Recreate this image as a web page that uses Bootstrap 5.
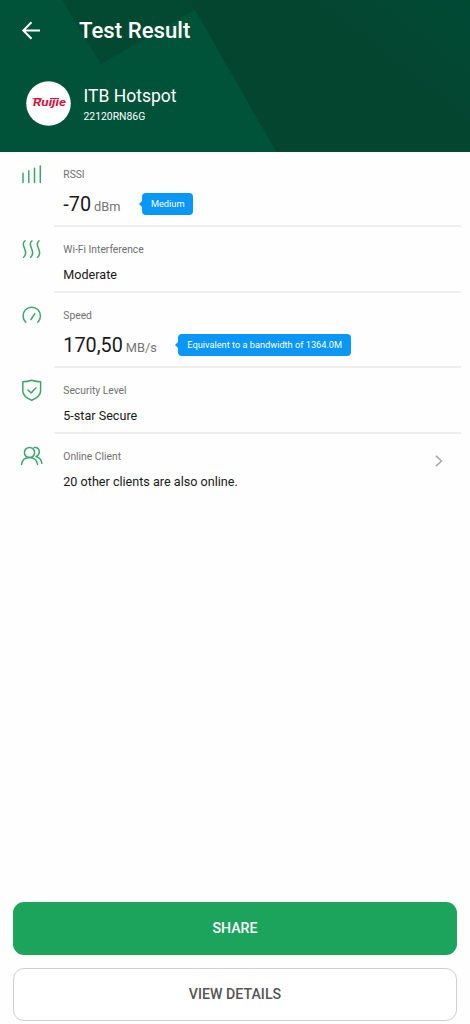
<!DOCTYPE html>
<html lang="en">
<head>
<meta charset="utf-8">
<meta name="viewport" content="width=device-width, initial-scale=1">
<title>Test Result</title>
<link href="https://cdn.jsdelivr.net/npm/bootstrap@5.3.0/dist/css/bootstrap.min.css" rel="stylesheet">
<style>
body{font-family:Roboto,"Liberation Sans",sans-serif;background:#fefefe;color:#191919;overflow:hidden}
.hero{height:151.5px;background:#005239;color:#fff}
.hero-art{inset:0;width:100%;height:100%}
.topbar{height:60px;padding-left:20px}
.title{font-size:22.2px;font-weight:500;line-height:28px;margin-left:37px}
.device{padding:20.5px 0 0 25.5px}
.logo{width:45px;height:45px}
.device-text{margin-left:13px;padding-top:2px}
.ssid{font-size:17.5px;line-height:22px}
.model{font-size:10.4px;line-height:14px;margin-top:3px}
.metric{padding-left:20px;padding-right:9px}
.metric-icon{width:24px;height:24px;margin-top:10px;fill:none;stroke:#3ba56e;stroke-width:1.5;stroke-linecap:round;stroke-linejoin:round}
.metric-body{margin-left:10px;padding:15px 0 0 9.3px;height:66px;border-bottom:2px solid #eeeff0}
.metric-body.tall{height:75px}
.metric-label{font-size:10.3px;line-height:16px;color:#707070}
.metric-value{font-size:12.6px;line-height:20px;margin-top:7px}
.reading{height:30px;margin-top:6px}
.reading-text{padding-top:2px}
.number{font-size:19.8px;line-height:30px}
.unit{font-size:12.8px;color:#747474;margin-left:3px}
.hint{background:#0a97f5;color:#fff;font-size:9.22px;line-height:21px;height:22px;border-radius:4px;padding:0 9px;margin-left:21.5px}
.hint::before{content:"";position:absolute;left:-3px;top:8px;border:3.5px solid transparent;border-right-color:#0a97f5;border-left:0}
.chevron{width:8px;height:12px;margin-right:18px;margin-top:6.5px;fill:none;stroke:#aaa;stroke-width:1.6}
.actions{padding:0 13px 3.5px;gap:12.5px}
.action{height:53px;border-radius:11px;font-size:14.2px;font-weight:500;padding-top:7px}
.action-share,.action-share:hover{background:#1ca45c;color:#fff}
.action-details,.action-details:hover{background:#fff;color:#555;border:1.3px solid #cfcfcf;padding-top:8px}
</style>
</head>
<body>
<div class="vh-100 d-flex flex-column">
  <header class="hero position-relative flex-shrink-0">
    <svg class="hero-art position-absolute" viewBox="0 0 470 151.5" preserveAspectRatio="none" aria-hidden="true">
      <defs><linearGradient id="shade" x1="0" x2="1" y1=".7" y2="0"><stop offset="0" stop-color="#04452f"/><stop offset=".6" stop-color="#044530"/><stop offset="1" stop-color="#004a34"/></linearGradient></defs>
      <path fill="#034932" d="M62 0H210L195 10 101 64Z"/>
      <path fill="url(#shade)" d="M190 0H470V151.5H276L195 10Z"/>
    </svg>
    <div class="topbar position-relative d-flex align-items-center">
      <svg width="22" height="22" viewBox="0 0 22 22" fill="none" stroke="#fff" stroke-width="2"><path d="M20 11.5H3.5M11.5 3.3 3.3 11.5l8.2 8.2"/></svg>
      <h1 class="title mb-0">Test Result</h1>
    </div>
    <div class="device position-relative d-flex align-items-center">
      <svg class="logo" viewBox="0 0 45 45" role="img" aria-label="Ruijie">
        <circle cx="22.5" cy="22.5" r="22.3" fill="#fff"/>
        <text x="7" y="25.2" font-family="Roboto" font-size="10.5" font-weight="700" font-style="italic" fill="#d1123f" textLength="33" lengthAdjust="spacingAndGlyphs">Ruijie</text>
        <path d="M6.5 17.7H16M24 17.5H33" stroke="#d1123f" stroke-width="1.1"/>
      </svg>
      <div class="device-text">
        <div class="ssid">ITB Hotspot</div>
        <div class="model">22120RN86G</div>
      </div>
    </div>
  </header>

  <main class="flex-grow-1">
    <section class="metric d-flex">
      <svg class="metric-icon" viewBox="0 0 24 24"><path d="M3 11.2v9.3M8.8 8.7v11.8M14.5 6.2v14.3M20.3 4v16.5"/></svg>
      <div class="metric-body tall flex-fill">
        <div class="metric-label">RSSI</div>
        <div class="reading d-flex align-items-center">
          <div class="reading-text"><span class="number">-70</span><span class="unit">dBm</span></div>
          <span class="hint position-relative">Medium</span>
        </div>
      </div>
    </section>
    <section class="metric d-flex">
      <svg class="metric-icon" viewBox="0 0 24 24"><path d="M5 3.8C2.4 5.5 3 8.2 4.5 11.5c1.5 3.2 1.8 6.3-.9 8.7M12 3.8c-2.6 1.7-2 4.4-.5 7.7 1.5 3.2 1.8 6.3-.9 8.7M19 3.8c-2.6 1.7-2 4.4-.5 7.7 1.5 3.2 1.8 6.3-.9 8.7"/></svg>
      <div class="metric-body flex-fill">
        <div class="metric-label">Wi-Fi Interference</div>
        <div class="metric-value">Moderate</div>
      </div>
    </section>
    <section class="metric d-flex">
      <svg class="metric-icon" viewBox="0 0 24 24"><path d="M5.8 19.2A8.7 8.7 0 1 1 17.7 19.2M11 16.5 14.8 10.6"/></svg>
      <div class="metric-body tall flex-fill">
        <div class="metric-label">Speed</div>
        <div class="reading d-flex align-items-center">
          <div class="reading-text"><span class="number">170,50</span><span class="unit">MB/s</span></div>
          <span class="hint position-relative">Equivalent to a bandwidth of 1364.0M</span>
        </div>
      </div>
    </section>
    <section class="metric d-flex">
      <svg class="metric-icon" viewBox="0 0 24 24"><path d="M11.7 2.2C9 3.2 6 3.7 2.8 3.7v9.2c0 4.4 4.2 7.3 8.9 9.3 4.7-2 8.9-4.9 8.9-9.3V3.7C17.4 3.7 14.4 3.2 11.7 2.2ZM8 12l3 2.9 5-5.2"/></svg>
      <div class="metric-body flex-fill">
        <div class="metric-label">Security Level</div>
        <div class="metric-value">5-star Secure</div>
      </div>
    </section>
    <section class="metric d-flex">
      <svg class="metric-icon" viewBox="0 0 24 24"><circle cx="9.5" cy="8.5" r="5.1"/><path d="M1.5 20.5C2.2 16.3 5.3 13.6 9.5 13.6s7.300 2.700 8 6.900M14.300 3.600c3-.6 5 1.400 5 4.200 0 2.300-1.200 3.900-3.300 4.600 3.300.8 5.300 3.200 5.900 6.900"/></svg>
      <div class="metric-body flex-fill border-0 d-flex justify-content-between align-items-start">
        <div>
          <div class="metric-label">Online Client</div>
          <div class="metric-value">20 other clients are also online.</div>
        </div>
        <svg class="chevron" viewBox="0 0 8 12"><path d="m1 .8 5.4 5.2L1 11.2"/></svg>
      </div>
    </section>
  </main>

  <footer class="actions d-flex flex-column">
    <button class="btn action action-share border-0 w-100">SHARE</button>
    <button class="btn action action-details w-100">VIEW DETAILS</button>
  </footer>
</div>
<script src="https://cdn.jsdelivr.net/npm/bootstrap@5.3.0/dist/js/bootstrap.bundle.min.js"></script>
</body>
</html>
